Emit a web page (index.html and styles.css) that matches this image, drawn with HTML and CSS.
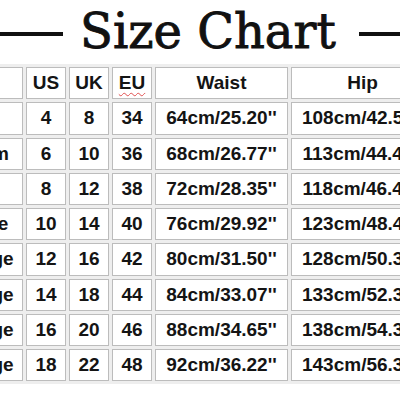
FILE: index.html
```html
<!DOCTYPE html>
<html>
<head>
<meta charset="utf-8">
<link rel="stylesheet" href="styles.css">
</head>
<body>
<div class="chart">
  <div class="title-row">
    <span class="rule rule-left"></span>
    <h1 class="title">Size Chart</h1>
    <span class="rule rule-right"></span>
  </div>
  <table class="sizes">
    <colgroup>
      <col class="c-label"><col class="c-num"><col class="c-num"><col class="c-num"><col class="c-waist"><col class="c-hip">
    </colgroup>
    <tr><td></td><td>US</td><td>UK</td><td><span class="spell">EU</span></td><td>Waist</td><td>Hip</td></tr>
    <tr><td>Small</td><td>4</td><td>8</td><td>34</td><td>64cm/25.20''</td><td>108cm/42.52''</td></tr>
    <tr><td>Medium</td><td>6</td><td>10</td><td>36</td><td>68cm/26.77''</td><td>113cm/44.49''</td></tr>
    <tr><td>Large</td><td>8</td><td>12</td><td>38</td><td>72cm/28.35''</td><td>118cm/46.46''</td></tr>
    <tr><td>X-Large</td><td>10</td><td>14</td><td>40</td><td>76cm/29.92''</td><td>123cm/48.43''</td></tr>
    <tr><td>2X-Large</td><td>12</td><td>16</td><td>42</td><td>80cm/31.50''</td><td>128cm/50.39''</td></tr>
    <tr><td>3X-Large</td><td>14</td><td>18</td><td>44</td><td>84cm/33.07''</td><td>133cm/52.36''</td></tr>
    <tr><td>4X-Large</td><td>16</td><td>20</td><td>46</td><td>88cm/34.65''</td><td>138cm/54.33''</td></tr>
    <tr><td>5X-Large</td><td>18</td><td>22</td><td>48</td><td>92cm/36.22''</td><td>143cm/56.30''</td></tr>
  </table>
</div>
</body>
</html>
```
FILE: styles.css
```css
html, body {
  margin: 0;
  padding: 0;
  background: #ffffff;
  overflow: hidden;
}
.chart {
  margin-left: -80px;
  width: 517px;
}
.title-row {
  display: flex;
  align-items: center;
  padding-top: 3px;
}
.rule {
  display: block;
  height: 4px;
  background: #111111;
  margin-top: 5px;
}
.rule-left {
  width: 143px;
  margin-right: 17px;
}
.rule-right {
  flex: 1;
  margin-left: 23px;
}
.title {
  margin: 0;
  font-family: "DejaVu Serif", serif;
  font-weight: normal;
  font-size: 48px;
  line-height: 56px;
  color: #111111;
  -webkit-text-stroke: 0.9px #111111;
  white-space: nowrap;
}
.sizes {
  margin-top: 5px;
  border-collapse: separate;
  border-spacing: 3px;
  table-layout: fixed;
  width: 517px;
  background: #eeeeee;
}
.c-label { width: 100px; }
.c-num { width: 40px; }
.c-waist { width: 133px; }
.c-hip { width: 143px; }
.sizes td {
  box-sizing: border-box;
  height: 32.25px;
  padding: 0;
  border: 1px solid #bcbcbc;
  background: #ffffff;
  text-align: center;
  vertical-align: middle;
  font-family: "Liberation Sans", Arial, sans-serif;
  font-weight: bold;
  font-size: 19px;
  color: #141414;
  white-space: nowrap;
  overflow: visible;
}
.spell {
  text-decoration: underline wavy #e05050;
  text-decoration-thickness: 1px;
  text-underline-offset: 3px;
}
```
